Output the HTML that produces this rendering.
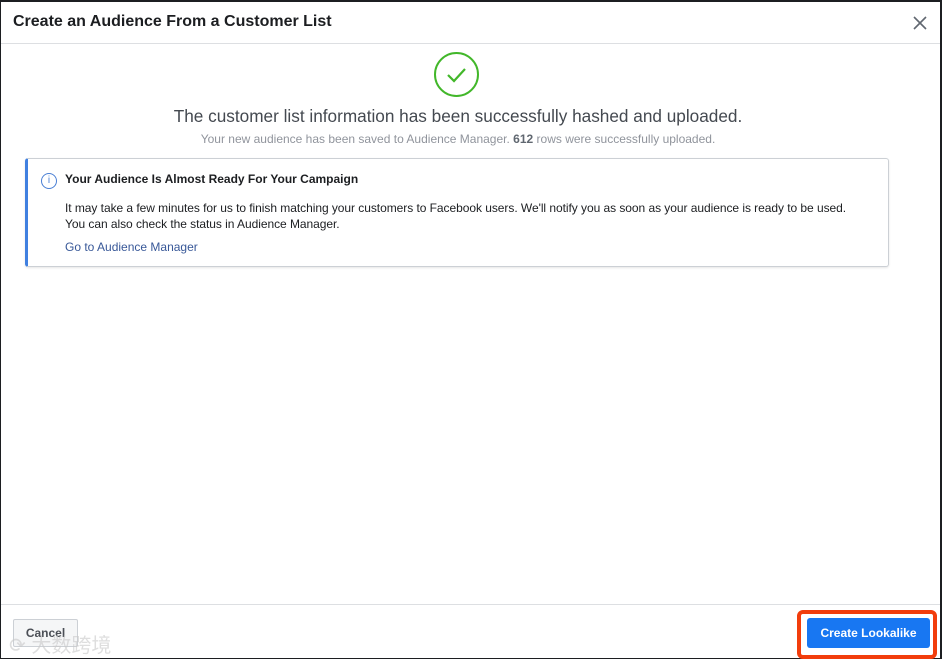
<!DOCTYPE html>
<html><head><meta charset="utf-8"><style>
*{margin:0;padding:0;box-sizing:border-box}
body{width:942px;height:658px;background:#1c1e21;font-family:"Liberation Sans",Helvetica,Arial,sans-serif;position:relative;overflow:hidden}
.dlg{position:absolute;left:1px;top:2px;width:939px;height:656px;background:#fff}
.hdr{position:absolute;left:0;top:0;width:100%;height:42px;border-bottom:1px solid #dddfe2}
.hdr h1{position:absolute;left:12px;top:11px;font-size:16px;font-weight:bold;color:#1c1e21}
.x{position:absolute;left:912px;top:14px}
.circ{position:absolute;left:433px;top:50px;width:45px;height:45px;border:2px solid #42b72a;border-radius:50%}
.t1{position:absolute;left:0;width:914px;top:104px;text-align:center;font-size:17.2px;color:#444950}
.t2{position:absolute;left:0;width:914px;top:130px;text-align:center;font-size:12px;color:#90949c}
.t2 b{color:#606770}
.box{position:absolute;left:24px;top:156px;width:864px;height:109px;border:1px solid #ccd0d5;border-left:3px solid #4080e0;border-radius:3px;box-shadow:0 1px 2px rgba(0,0,0,.1)}
.box .ic{position:absolute;left:13px;top:14px;width:16px;height:16px;border:1px solid #4a7fd4;border-radius:50%;color:#4a7fd4;font-size:10px;text-align:center;line-height:14px}
.box h2{position:absolute;left:37px;top:13px;font-size:12px;font-weight:bold;color:#1c1e21}
.box p{position:absolute;left:37px;top:41px;font-size:12px;line-height:16px;color:#1c1e21;letter-spacing:-0.05px}
.box a{position:absolute;left:37px;top:81px;font-size:12px;color:#385898;text-decoration:none}
.ftr{position:absolute;left:0;top:602px;width:100%;height:54px;border-top:1px solid #dddfe2}
.cancel{position:absolute;left:12px;top:14px;width:65px;height:28px;background:#f5f6f7;border:1px solid #ccd0d5;border-radius:2px;font-size:12px;font-weight:bold;color:#4b4f56;text-align:center;line-height:26px}
.wm{position:absolute;left:8px;top:24px;font-size:20px;color:rgba(200,200,200,.6);font-family:"Liberation Sans","Noto Sans CJK SC",sans-serif}
.red{position:absolute;left:796px;top:5px;width:140px;height:49px;border:4px solid #f23d0c;border-radius:6px}
.cl{position:absolute;left:806px;top:13px;width:123px;height:30px;background:#1877f2;border-radius:3px;color:#fff;font-size:12px;font-weight:bold;text-align:center;line-height:30px}
</style></head><body>
<div class="dlg">
<div class="hdr"><h1>Create an Audience From a Customer List</h1>
<svg class="x" width="14" height="14" viewBox="0 0 14 14"><path d="M1 1L13 13M13 1L1 13" stroke="#606770" stroke-width="1.6"/></svg></div>
<div class="circ"><svg width="41" height="41" viewBox="0 0 41 41" style="position:absolute;left:0;top:0"><path d="M12 21l6 6 11-12" stroke="#42b72a" stroke-width="2.2" fill="none"/></svg></div>
<div class="t1">The customer list information has been successfully hashed and uploaded.</div>
<div class="t2">Your new audience has been saved to Audience Manager. <b>612</b> rows were successfully uploaded.</div>
<div class="box"><div class="ic">i</div><h2>Your Audience Is Almost Ready For Your Campaign</h2>
<p>It may take a few minutes for us to finish matching your customers to Facebook users. We'll notify you as soon as your audience is ready to be used.<br>You can also check the status in Audience Manager.</p>
<a>Go to Audience Manager</a></div>
<div class="ftr"><div class="cancel">Cancel</div><div class="wm">⟳ 大数跨境</div>
<div class="red"></div><div class="cl">Create Lookalike</div></div>
</div>
</body></html>
